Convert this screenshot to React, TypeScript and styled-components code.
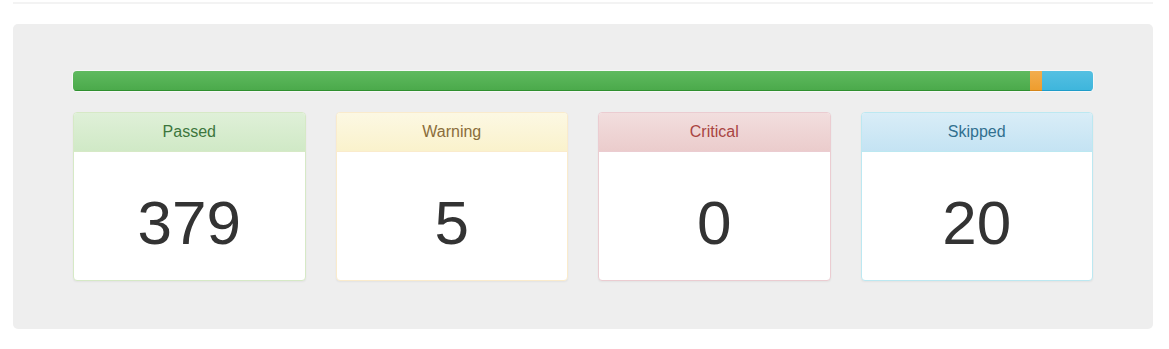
import React from 'react';
import styled, { createGlobalStyle } from 'styled-components';

type Tone = 'success' | 'warning' | 'danger' | 'info';

interface ToneStyle {
  text: string;
  from: string;
  to: string;
  border: string;
  barFrom: string;
  barTo: string;
  barEdge: string;
}

const tones: Record<Tone, ToneStyle> = {
  success: {
    text: '#3c763d',
    from: '#dff0d8',
    to: '#d0e9c6',
    border: '#d6e9c6',
    barFrom: '#5fba5f',
    barTo: '#4aa94a',
    barEdge: '#2f8f2f',
  },
  warning: {
    text: '#8a6d3b',
    from: '#fcf8e3',
    to: '#faf2cc',
    border: '#faebcc',
    barFrom: '#f2ad4e',
    barTo: '#ee9c2c',
    barEdge: '#d5851a',
  },
  danger: {
    text: '#a94442',
    from: '#f2dede',
    to: '#ebcccc',
    border: '#ebccd1',
    barFrom: '#d9534f',
    barTo: '#c9302c',
    barEdge: '#ac2925',
  },
  info: {
    text: '#31708f',
    from: '#d9edf7',
    to: '#c4e3f3',
    border: '#bce8f1',
    barFrom: '#55c0e2',
    barTo: '#3db5dc',
    barEdge: '#1f9cc9',
  },
};

interface Result {
  label: string;
  count: number;
  tone: Tone;
}

const results: Result[] = [
  { label: 'Passed', count: 379, tone: 'success' },
  { label: 'Warning', count: 5, tone: 'warning' },
  { label: 'Critical', count: 0, tone: 'danger' },
  { label: 'Skipped', count: 20, tone: 'info' },
];

const GlobalStyle = createGlobalStyle`
  html, body {
    margin: 0;
    padding: 0;
    background: #ffffff;
  }
  body {
    font-family: "Liberation Sans", Arial, Helvetica, sans-serif;
    font-size: 14px;
    color: #333333;
  }
`;

const Page = styled.div`
  padding: 2px 16px 0 13px;
`;

const Rule = styled.div`
  height: 2px;
  background: #f3f3f3;
  margin-bottom: 20px;
`;

const Well = styled.div`
  background: #eeeeee;
  border-radius: 5px;
  padding: 47px 60px 48px;
`;

const Progress = styled.div`
  display: flex;
  height: 20px;
  margin-bottom: 21px;
  border-radius: 4px;
  overflow: hidden;
  background: linear-gradient(to bottom, #ebebeb, #f5f5f5);
  box-shadow: 0 0 0 1px rgba(255, 255, 255, 0.6);
`;

const Bar = styled.div<{ $tone: Tone }>`
  height: 100%;
  background: ${({ $tone }) =>
    `linear-gradient(to bottom, ${tones[$tone].barFrom}, ${tones[$tone].barTo})`};
  box-shadow: inset 0 -1px 0 ${({ $tone }) => tones[$tone].barEdge};
`;

const Grid = styled.div`
  display: grid;
  grid-template-columns: repeat(4, 1fr);
  column-gap: 30px;
`;

const Panel = styled.div<{ $tone: Tone }>`
  background: #ffffff;
  border: 1px solid ${({ $tone }) => tones[$tone].border};
  border-radius: 4px;
  box-shadow: 0 1px 2px rgba(0, 0, 0, 0.05);
  overflow: hidden;
`;

const Heading = styled.div<{ $tone: Tone }>`
  padding: 10px 15px;
  color: ${({ $tone }) => tones[$tone].text};
  background: ${({ $tone }) =>
    `linear-gradient(to bottom, ${tones[$tone].from}, ${tones[$tone].to})`};
  border-bottom: 1px solid ${({ $tone }) => tones[$tone].border};
  text-align: center;
`;

const Title = styled.h3`
  margin: 0;
  font-size: 16px;
  font-weight: 400;
  line-height: 1.1;
`;

const Body = styled.div`
  padding: 40px 15px 26px;
  text-align: center;
`;

const Count = styled.div`
  font-size: 62px;
  line-height: 62px;
  color: #333333;
`;

const App: React.FC = () => {
  const total = results.reduce((sum, r) => sum + r.count, 0);

  return (
    <>
      <GlobalStyle />
      <Page>
        <Rule />
        <Well>
          <Progress>
            {results
              .filter((r) => r.count > 0)
              .map((r) => (
                <Bar
                  key={r.label}
                  $tone={r.tone}
                  style={{ width: `${(r.count / total) * 100}%` }}
                />
              ))}
          </Progress>
          <Grid>
            {results.map((r) => (
              <Panel key={r.label} $tone={r.tone}>
                <Heading $tone={r.tone}>
                  <Title>{r.label}</Title>
                </Heading>
                <Body>
                  <Count>{r.count}</Count>
                </Body>
              </Panel>
            ))}
          </Grid>
        </Well>
      </Page>
    </>
  );
};

export default App;
